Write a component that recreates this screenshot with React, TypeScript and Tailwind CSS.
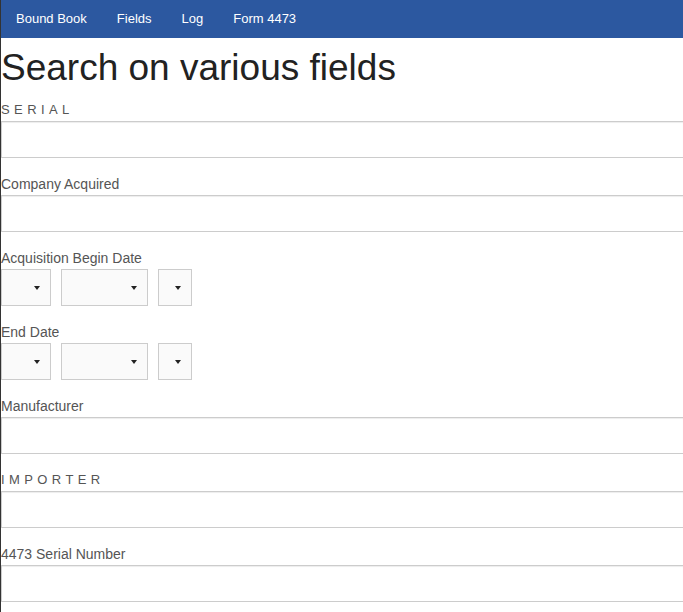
import React from 'react';

const navItems = ['Bound Book', 'Fields', 'Log', 'Form 4473'];

const Caret = () => (
  <svg width="6" height="4" viewBox="0 0 6 4" className="block">
    <polygon points="0,0 6,0 3,4" fill="#222" />
  </svg>
);

const TextField = ({ label, caps }: { label: string; caps?: boolean }) => (
  <div className="mb-4">
    <div
      className={
        caps
          ? 'h-5 leading-5 text-[13px] tracking-[4.4px] text-[#555]'
          : 'h-5 leading-5 text-[14px] text-[#555]'
      }
    >
      {label}
    </div>
    <input
      type="text"
      className="mt-px block h-[37px] w-full border border-r-0 border-[#ccc] bg-white shadow-[inset_0_1px_1px_rgba(0,0,0,0.075)] outline-none"
    />
  </div>
);

const DateField = ({ label }: { label: string }) => (
  <div className="mb-4">
    <div className="h-5 leading-5 text-[14px] text-[#555]">{label}</div>
    <div className="mt-px flex gap-[10px]">
      <div className="flex h-[37px] w-[50px] items-center justify-end border border-[#ccc] bg-[#fafafa] pr-[10px]">
        <Caret />
      </div>
      <div className="flex h-[37px] w-[87px] items-center justify-end border border-[#ccc] bg-[#fafafa] pr-[10px]">
        <Caret />
      </div>
      <div className="flex h-[37px] w-[34px] items-center justify-end border border-[#ccc] bg-[#fafafa] pr-[10px]">
        <Caret />
      </div>
    </div>
  </div>
);

export default function App() {
  return (
    <div className="min-h-screen overflow-hidden border-l border-[#333] bg-white font-['Liberation_Sans',Arial,sans-serif]">
      <nav className="flex h-[38px] items-center bg-[#2c58a0]">
        {navItems.map((item) => (
          <a key={item} href="#" className="px-[15px] text-[13px] text-white">
            {item}
          </a>
        ))}
      </nav>

      <h1 className="mt-[10px] text-[37px] leading-[40px] text-[#222]">Search on various fields</h1>

      <form className="mt-3">
        <TextField label="SERIAL" caps />
        <TextField label="Company Acquired" />
        <DateField label="Acquisition Begin Date" />
        <DateField label="End Date" />
        <TextField label="Manufacturer" />
        <TextField label="IMPORTER" caps />
        <TextField label="4473 Serial Number" />
      </form>
    </div>
  );
}
